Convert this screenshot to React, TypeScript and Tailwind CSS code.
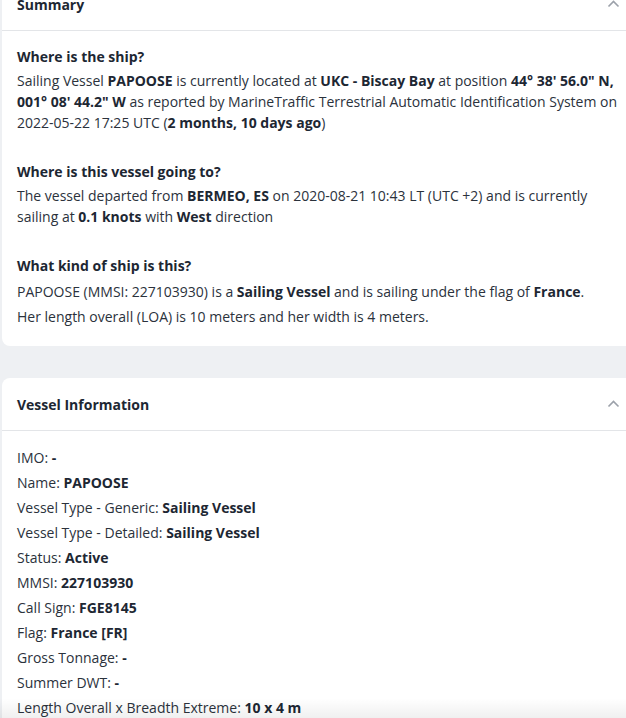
import React from "react";

const INFO: [string, string][] = [
  ["IMO", "-"],
  ["Name", "PAPOOSE"],
  ["Vessel Type - Generic", "Sailing Vessel"],
  ["Vessel Type - Detailed", "Sailing Vessel"],
  ["Status", "Active"],
  ["MMSI", "227103930"],
  ["Call Sign", "FGE8145"],
  ["Flag", "France [FR]"],
  ["Gross Tonnage", "-"],
  ["Summer DWT", "-"],
  ["Length Overall x Breadth Extreme", "10 x 4 m"],
];

function Chevron() {
  return (
    <svg width="13" height="8" viewBox="0 0 13 8" className="text-[#9ca1aa]">
      <path d="M1.5 6.5 L6.5 1.5 L11.5 6.5" fill="none" stroke="currentColor" strokeWidth="1.6" />
    </svg>
  );
}

function CardHeader({ title }: { title: string }) {
  return (
    <div className="h-[53px] flex items-center justify-between pl-[15px] pr-[6px] border-b border-[#e3e5e8]">
      <h2 className="text-[14px] font-bold text-[#1d2733]">{title}</h2>
      <Chevron />
    </div>
  );
}

export default function App() {
  return (
    <div
      className="relative w-[626px] h-[718px] overflow-hidden bg-[#eef0f3] pl-[2px] text-[14px] text-[#2b323c]"
      style={{ fontFamily: '"Open Sans", "Noto Sans", sans-serif' }}
    >
      {/* SUMMARY */}
      <section className="-mt-[22px] bg-white rounded-l-lg">
        <CardHeader title="Summary" />
        <div className="pl-[15px] pr-[4px] pt-[15px] pb-[17px]">
          <h3 className="font-bold leading-[22px] text-[#1d2733]">Where is the ship?</h3>
          <p className="mt-[2px] leading-[21px]">
            Sailing Vessel <b className="text-[#1d2733]">PAPOOSE</b> is currently located at{" "}
            <b className="text-[#1d2733]">UKC - Biscay Bay</b> at position{" "}
            <b className="text-[#1d2733]">44° 38' 56.0" N, 001° 08' 44.2" W</b> as reported by MarineTraffic
            Terrestrial Automatic Identification System on 2022-05-22 17:25 UTC (
            <b className="text-[#1d2733]">2 months, 10 days ago</b>)
          </p>

          <h3 className="mt-[28px] font-bold leading-[22px] text-[#1d2733]">Where is this vessel going to?</h3>
          <p className="mt-[2px] leading-[21px]">
            The vessel departed from <b className="text-[#1d2733]">BERMEO, ES</b> on 2020-08-21 10:43 LT (UTC +2) and
            is currently sailing at <b className="text-[#1d2733]">0.1 knots</b> with{" "}
            <b className="text-[#1d2733]">West</b> direction
          </p>

          <h3 className="mt-[28px] font-bold leading-[22px] text-[#1d2733]">What kind of ship is this?</h3>
          <div className="mt-[2px] leading-[25px]">
            <p>
              PAPOOSE (MMSI: 227103930) is a <b className="text-[#1d2733]">Sailing Vessel</b> and is sailing under the
              flag of <b className="text-[#1d2733]">France</b>.
            </p>
            <p>Her length overall (LOA) is 10 meters and her width is 4 meters.</p>
          </div>
        </div>
      </section>

      {/* VESSEL INFORMATION */}
      <section className="mt-[32px] bg-white rounded-l-lg">
        <CardHeader title="Vessel Information" />
        <div className="pl-[15px] pr-[4px] pt-[14px] pb-[17px]">
          {INFO.map(([k, v]) => (
            <div key={k} className="leading-[25px]">
              {k}: <b className="text-[#1d2733]">{v}</b>
            </div>
          ))}
        </div>
      </section>

      {/* BOTTOM FADE */}
      <div className="absolute left-0 right-0 bottom-0 h-[20px] bg-gradient-to-b from-black/0 to-black/[0.06]" />
    </div>
  );
}
